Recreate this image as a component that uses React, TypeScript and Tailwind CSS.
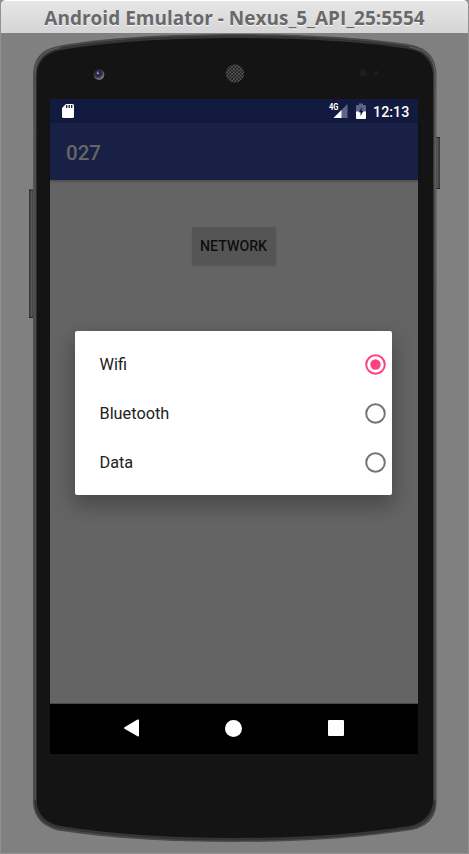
import React from "react";

function PhoneFrame() {
  return (
    <svg className="absolute inset-0" width="469" height="854" viewBox="0 0 469 854" fill="none">
      <defs>
        <linearGradient id="side" x1="0" x2="0" y1="0" y2="1">
          <stop offset="0" stopColor="#484848" />
          <stop offset=".12" stopColor="#58595c" />
          <stop offset=".4" stopColor="#4c4d50" />
          <stop offset="1" stopColor="#484848" />
        </linearGradient>
        <linearGradient id="key" x1="0" x2="1" y1="0" y2="0">
          <stop offset="0" stopColor="#303030" />
          <stop offset=".5" stopColor="#555" />
          <stop offset="1" stopColor="#333" />
        </linearGradient>
        <radialGradient id="lens" cx=".4" cy=".35" r=".7">
          <stop offset="0" stopColor="#8080b0" />
          <stop offset=".3" stopColor="#242450" />
          <stop offset=".5" stopColor="#303034" />
          <stop offset="1" stopColor="#929292" />
        </radialGradient>
        <pattern id="mesh" width="3.4" height="3.4" patternUnits="userSpaceOnUse">
          <rect width="3.4" height="3.4" fill="#585858" />
          <circle cx="0.85" cy="0.85" r=".95" fill="#141414" />
          <circle cx="2.55" cy="2.55" r=".95" fill="#141414" />
        </pattern>
      </defs>
      <rect x="29" y="190" width="5" height="128" fill="url(#key)" />
      <path d="M29 190h5M29 317.500h5" stroke="#222" />
      <rect x="435" y="137" width="5" height="52" fill="url(#key)" />
      <path d="M435 137.500h5M435 188.500h5" stroke="#222" />
      <path
        d="M33 74C34 57 42 49 60 45.500C105 37.500 170 34 235 34C300 34 365 37.500 410 44.500C428 48 436 58 436.500 74V805C435 819 426 827 412 830C360 838 300 842 235 842C170 842 110 838.500 58 830.500C44 827 34 818 33 804Z"
        fill="url(#side)"
      />
      <path
        d="M35 75C36 60 43 52 60 48C105 40 170 36 235 36C300 36 365 40 410 47C427 51 434 60 434.500 75V804C433 817 424 825 411 828C360 836 300 840 235 840C170 840 110 836 59 828C45 825 36 817 35 804Z"
        stroke="#333334"
        fill="#363637"
      />
      <path d="M35.200 800V74C35.500 60 44 51 60 47.500" stroke="#85868a" strokeWidth=".8" opacity=".6" />
      <path d="M409 47C427 50 434.500 60 434.800 74V800" stroke="#85868a" strokeWidth=".8" opacity=".6" />
      <path
        d="M36.700 75C37.500 61 45 53 61 50C105 42 170 38 235 38C300 38 365 42 409 49C425 52 432 61 433 75V803C431 815 423 823 410 826C360 834 300 838 235 838C170 838 110 834 60 826C46 823 38 815 36.700 803Z"
        fill="#141414"
      />
      <circle cx="99" cy="74.500" r="5.300" fill="url(#lens)" />
      <circle cx="99" cy="74" r="2.500" fill="#27275a" />
      <circle cx="98" cy="73.200" r="1" fill="#a0a0cd" />
      <circle cx="235" cy="73.500" r="9.300" fill="url(#mesh)" />
      <circle cx="363" cy="73" r="3.700" fill="#1d1d1d" />
      <circle cx="376.500" cy="73" r="2.300" fill="#1f1f1f" />
    </svg>
  );
}

function StatusBar() {
  return (
    <div className="flex h-6 items-center justify-between bg-[#131a40] pr-[9px] pl-3 text-white">
      <svg width="13" height="16" viewBox="0 0 13 16">
        <path d="M4 1h6.500Q12 1 12 2.500v11Q12 15 10.500 15h-9Q0 15 0 13.500V5Z" fill="#fff" />
        <path d="M4.700 2v3M7.200 2v3M9.700 2v3" stroke="#131a40" strokeWidth="1.300" />
      </svg>
      <div className="flex items-center">
        <svg width="20" height="16" viewBox="0 0 20 16" className="mr-[7px]">
          <path d="M19.500 1v14h-14Z" fill="#5f638a" />
          <path d="M13.500 7v8h-8Z" fill="#fff" />
          <text x="1" y="7.300" fontSize="8.500" fontWeight="700" fill="#fff" textLength="9.500" lengthAdjust="spacingAndGlyphs" fontFamily="Roboto, sans-serif">4G</text>
        </svg>
        <svg width="12" height="16" viewBox="0 0 12 16" className="mr-[6px]">
          <path d="M1 3Q1 2 2 2h2V.5h4V2h2Q11 2 11 3v6H1Z" fill="#5f638a" />
          <path d="M1 8.500h10V15q0 1-1 1H2q-1 0-1-1Z" fill="#fff" />
          <path d="M7 4 3.800 9.300h1.700V13L8.400 7.900H6.800Z" fill="#131a40" />
        </svg>
        <span className="w-[36px] pt-[2px] text-[14.3px] leading-none font-medium">12:13</span>
      </div>
    </div>
  );
}

function Option({ label, selected = false }: { label: string; selected?: boolean }) {
  return (
    <label className="flex h-[49px] items-center justify-between pr-[6px] pl-[25px] text-[16.3px] text-[#212121]">
      <span className="pt-[2px]">{label}</span>
      <svg width="21" height="21" viewBox="0 0 21 21" fill="none">
        <circle cx="10.500" cy="10.500" r="9.300" stroke={selected ? "#ff4081" : "#757575"} strokeWidth="2" />
        {selected && <circle cx="10.500" cy="10.500" r="5.200" fill="#ff4081" />}
      </svg>
    </label>
  );
}

export default function App() {
  return (
    <div className="relative h-[854px] w-[469px] overflow-hidden bg-[#808080] font-[Roboto,sans-serif]">
      <PhoneFrame />
      <div className="relative flex h-full flex-col">
        <header className="h-[33px] shrink-0 bg-[#929292]">
          <div className="ml-px flex h-full w-[467px] items-center justify-center rounded-t-[5px] border-t border-white bg-linear-to-b from-[#e7e7e7] to-[#d5d5d5] pt-[3px] font-['Open_Sans','Noto_Sans',sans-serif] text-[19px] font-bold text-[#696969] [text-shadow:0_1px_0_#f8f8f8]">
            <span className="whitespace-nowrap">Android Emulator - Nexus_5_API_25:5554</span>
          </div>
        </header>
        <main className="mt-[66px] ml-[50px] flex h-[655px] w-[368px] flex-col bg-[#646464]">
          <StatusBar />
          <div className="flex h-[57px] items-center bg-[#192046] pt-1 pl-4 text-[20.5px] font-medium text-[#666] shadow-[0_1px_3px_rgba(0,0,0,0.35)]">027</div>
          <section className="flex grow flex-col items-center border-b border-[#484848]">
            <button className="mt-[47px] mr-px h-[38px] w-[84px] rounded-[2px] bg-[#555] pt-[2px] text-[14.2px] font-medium text-[#0e0e0e] shadow-[0_1px_2px_rgba(0,0,0,0.15)]">NETWORK</button>
            <div className="mt-[66.3px] mr-[2px] h-[164px] w-[317px] rounded-[2px] bg-white pt-[8.7px] shadow-[0_9px_20px_2px_rgba(0,0,0,0.28)]">
              <Option label="Wifi" selected />
              <Option label="Bluetooth" />
              <Option label="Data" />
            </div>
          </section>
          <nav className="flex h-[50px] items-center justify-between bg-black pr-[74px] pb-[2px] pl-[73px]">
            <svg width="17" height="18" viewBox="0 0 17 18"><path d="M1.500 8.300 14.500.6Q16 0 16 1.300v15.200Q16 18 14.500 17.200L1.500 9.700Q.3 9 1.500 8.300Z" fill="#fff" /></svg>
            <svg width="17" height="17" viewBox="0 0 17 17" className="mr-px"><circle cx="8.500" cy="8.500" r="8.500" fill="#fff" /></svg>
            <span className="size-4 rounded-[1px] bg-white" />
          </nav>
        </main>
      </div>
      <div className="absolute inset-x-0 top-[33px] bottom-0 border-x border-b border-[#929292]" />
    </div>
  );
}
